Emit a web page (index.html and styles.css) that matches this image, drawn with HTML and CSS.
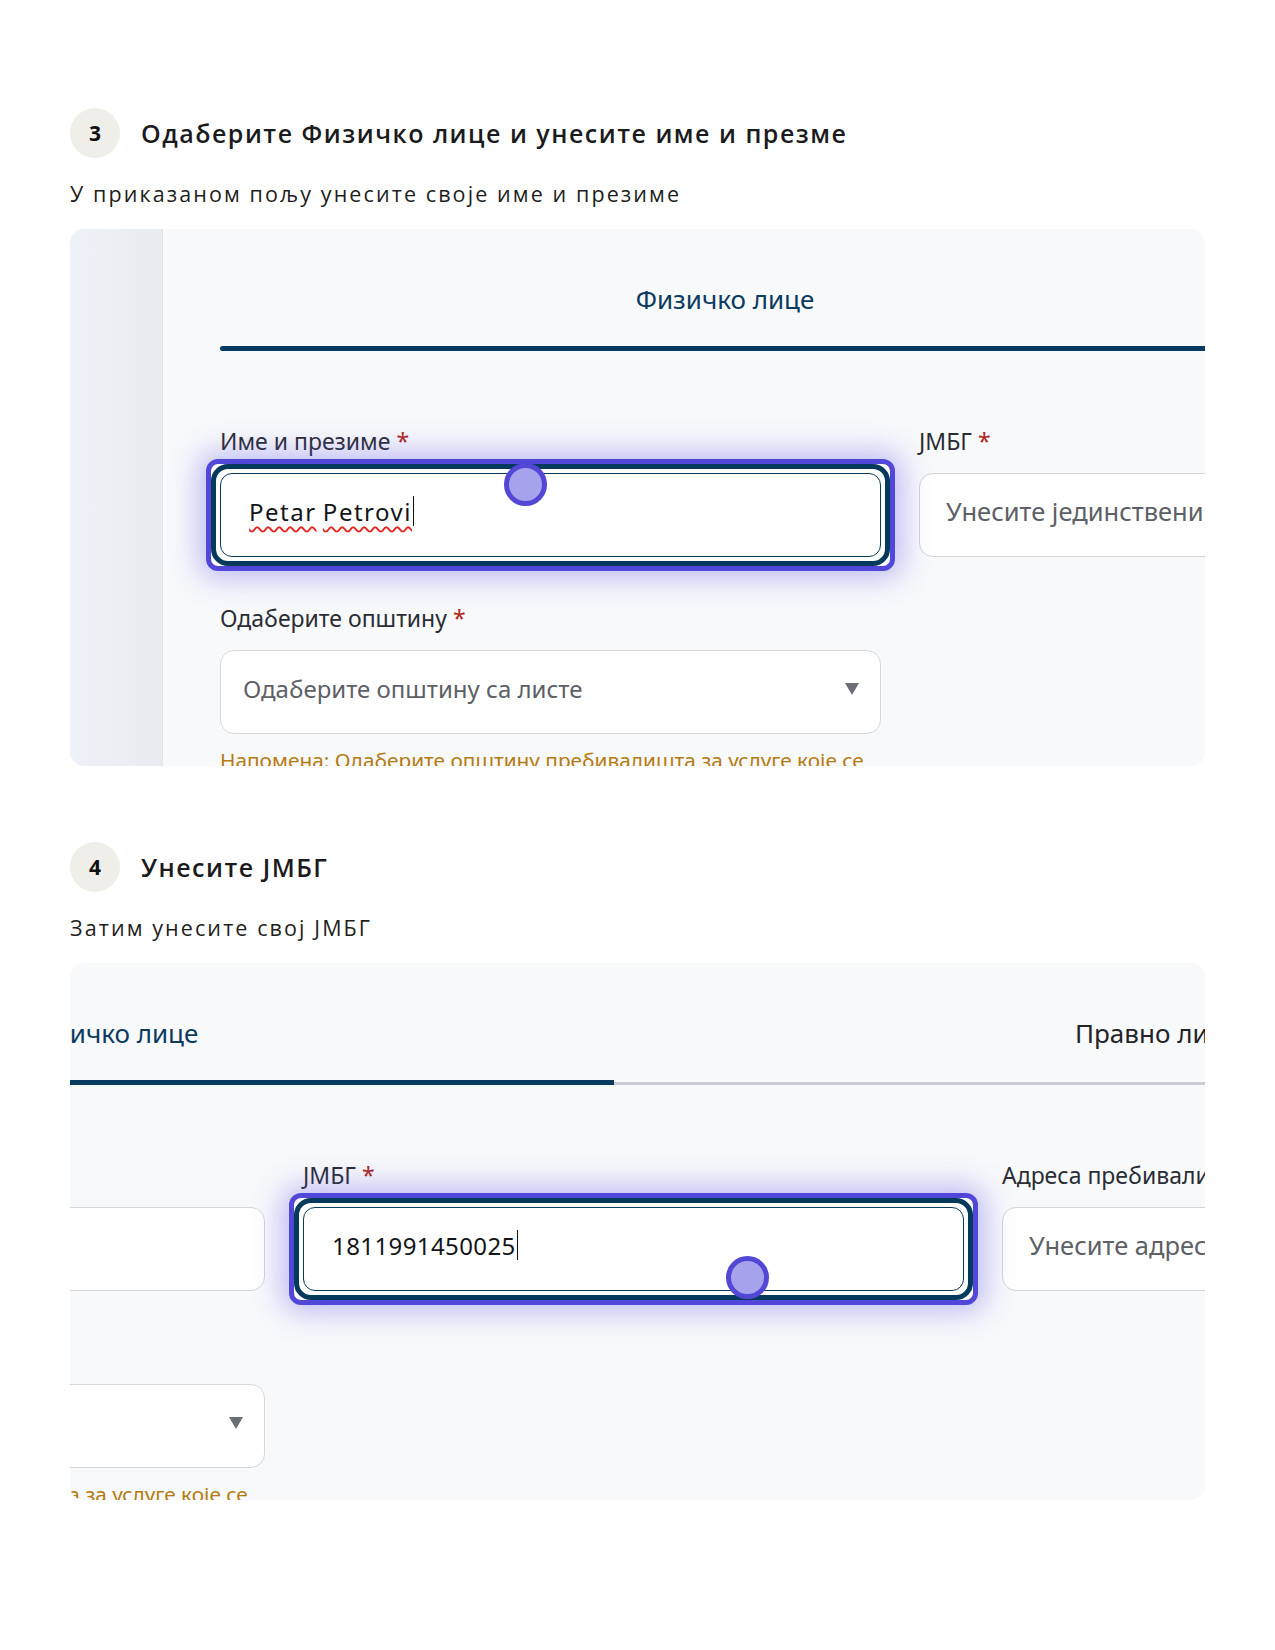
FILE: index.html
```html
<!DOCTYPE html>
<html lang="sr">
<head>
<meta charset="utf-8">
<title>Упутство</title>
<link rel="stylesheet" href="styles.css">
</head>
<body>
<div class="page">

  <section class="step">
    <div class="step-head">
      <span class="badge">3</span>
      <h2 class="step-title">Одаберите Физичко лице и унесите име и презме</h2>
    </div>
    <p class="step-desc">У приказаном пољу унесите своје име и презиме</p>
    <div class="shot">
      <div class="app">
        <aside class="sidebar"></aside>
        <div class="main">
          <div class="tabs">
            <div class="tab tab-active"><span class="tab-label">Физичко лице</span><span class="tab-bar"></span></div>
            <div class="tab tab-idle"><span class="tab-label">Правно лице</span><span class="tab-bar"></span></div>
          </div>
          <div class="form">
            <div class="field">
              <div class="label">Име и презиме <span class="req">*</span></div>
              <div class="focus-ring">
                <div class="focus-inner">
                  <div class="input input-focused"><span class="typo">Petar</span>&nbsp;<span class="typo">Petrovi</span><span class="caret"></span></div>
                </div>
                <span class="touch touch-top"></span>
              </div>
            </div>
            <div class="field">
              <div class="label">ЈМБГ <span class="req">*</span></div>
              <div class="input input-plain"><span class="placeholder">Унесите јединствени матични број грађана</span></div>
            </div>
            <div class="field">
              <div class="label">Адреса пребивалишта <span class="req">*</span></div>
              <div class="input input-plain"><span class="placeholder">Унесите адресу пребивалишта</span></div>
            </div>
            <div class="field">
              <div class="label">Одаберите општину <span class="req">*</span></div>
              <div class="select">
                <span class="placeholder placeholder-select">Одаберите општину са листе</span>
                <svg class="arrow" width="14" height="12" viewBox="0 0 14 12"><polygon points="0,0 14,0 7,12"/></svg>
              </div>
              <p class="note"><span class="note-line">Напомена: Одаберите општину пребивалишта за услуге које се</span><br>пружају на нивоу локалне самоуправе.</p>
            </div>
          </div>
        </div>
      </div>
    </div>
  </section>

  <section class="step step-next">
    <div class="step-head">
      <span class="badge">4</span>
      <h2 class="step-title">Унесите ЈМБГ</h2>
    </div>
    <p class="step-desc">Затим унесите свој ЈМБГ</p>
    <div class="shot">
      <div class="app app-shifted">
        <aside class="sidebar"></aside>
        <div class="main">
          <div class="tabs">
            <div class="tab tab-active"><span class="tab-label">Физичко лице</span><span class="tab-bar"></span></div>
            <div class="tab tab-idle"><span class="tab-label">Правно лице</span><span class="tab-bar"></span></div>
          </div>
          <div class="form">
            <div class="field">
              <div class="label">Име и презиме <span class="req">*</span></div>
              <div class="input input-plain"><span class="value">Petar Petrović</span></div>
            </div>
            <div class="field">
              <div class="label">ЈМБГ <span class="req">*</span></div>
              <div class="focus-ring">
                <div class="focus-inner">
                  <div class="input input-focused"><span class="digits">1811991450025</span><span class="caret"></span></div>
                </div>
                <span class="touch touch-bottom"></span>
              </div>
            </div>
            <div class="field">
              <div class="label">Адреса пребивалишта <span class="req">*</span></div>
              <div class="input input-plain"><span class="placeholder">Унесите адресу пребивалишта</span></div>
            </div>
            <div class="field">
              <div class="label">Одаберите општину <span class="req">*</span></div>
              <div class="select">
                <span class="placeholder placeholder-select">Одаберите општину са листе</span>
                <svg class="arrow" width="14" height="12" viewBox="0 0 14 12"><polygon points="0,0 14,0 7,12"/></svg>
              </div>
              <p class="note"><span class="note-line">Напомена: Одаберите општину пребивалишта за услуге које се</span><br>пружају на нивоу локалне самоуправе.</p>
            </div>
          </div>
        </div>
      </div>
    </div>
  </section>

</div>
</body>
</html>
```

FILE: styles.css
```css
* { box-sizing: border-box; }

html, body {
  margin: 0;
  padding: 0;
  background: #ffffff;
}

body {
  font-family: "Open Sans", "Noto Sans", sans-serif;
  color: #1c1c1e;
}

.page {
  padding: 108px 70px 0 70px;
}

.step-next {
  margin-top: 76px;
}

.step-head {
  display: flex;
  align-items: center;
  gap: 21px;
  height: 50px;
}

.badge {
  width: 50px;
  height: 50px;
  border-radius: 50%;
  background: #f0eee8;
  display: flex;
  align-items: center;
  justify-content: center;
  font-family: "Open Sans", sans-serif;
  font-weight: 700;
  font-size: 21px;
  color: #111;
  flex-shrink: 0;
}

.step-title {
  margin: 0;
  font-size: 25px;
  font-weight: 600;
  letter-spacing: 1.5px;
  color: #1b1b1d;
  line-height: 32px;
}

.step-desc {
  margin: 22px 0 21px 0;
  font-size: 21.5px;
  line-height: 28px;
  letter-spacing: 2.1px;
  color: #1e1e20;
}

/* screenshot card */
.shot {
  height: 537px;
  border-radius: 14px;
  background: #f8f9fb;
  overflow: hidden;
}

.app {
  display: flex;
  width: 2300px;
  height: 537px;
  font-family: "Noto Sans", "Open Sans", sans-serif;
}

.app-shifted {
  margin-left: -616px;
}

.sidebar {
  width: 93px;
  flex-shrink: 0;
  background: linear-gradient(90deg, #eef2f8 0%, #e8ebef 100%);
  border-right: 1.5px solid #e0e3e7;
}

.main {
  flex: 1;
  padding: 53px 0 0 57px;
}

/* tabs */
.tabs {
  display: flex;
}

.tab {
  width: 1010px;
  display: flex;
  flex-direction: column;
}

.tab-label {
  font-size: 26px;
  line-height: 34px;
  height: 34px;
}

.tab-active .tab-label {
  text-align: center;
  color: #0b3b5f;
  margin-bottom: 30px;
}

.tab-active .tab-bar {
  height: 5px;
  background: #063a5e;
  border-radius: 3px 0 0 3px;
}

.tab-idle .tab-label {
  padding-left: 461px;
  color: #232427;
  margin-bottom: 32px;
}

.tab-idle .tab-bar {
  height: 3px;
  background: #c9cdd3;
}

/* form */
.form {
  margin-top: 75px;
  display: grid;
  grid-template-columns: repeat(3, 661px);
  column-gap: 38px;
  row-gap: 46px;
  align-items: start;
}

.label {
  font-size: 23px;
  line-height: 30px;
  color: #2a2d33;
  margin-bottom: 17px;
}

.req {
  color: #b3261e;
}

.input,
.select {
  height: 84px;
  border-radius: 14px;
  background: #ffffff;
  display: flex;
  align-items: center;
  font-size: 24px;
  padding-bottom: 8px;
}

.input-plain {
  border: 1.5px solid #d3d5da;
  padding-left: 26px;
  white-space: nowrap;
  overflow: hidden;
}

.input-focused {
  border: 1.5px solid #083a5c;
  border-radius: 12px;
  padding-left: 28px;
  color: #141518;
  white-space: nowrap;
}

.placeholder {
  color: #5d6066;
  white-space: nowrap;
  font-size: 25.5px;
}

.placeholder-select {
  font-size: 24px;
}

.value {
  color: #141518;
}

.typo {
  letter-spacing: 1.5px;
  text-decoration: underline wavy #e3241f;
  text-decoration-thickness: 1.5px;
  text-underline-offset: 5px;
  text-decoration-skip-ink: none;
}

.digits {
  letter-spacing: 0.4px;
}

.caret {
  display: inline-block;
  width: 1.5px;
  height: 30px;
  background: #111;
  margin-left: 1px;
}

.select {
  border: 1.5px solid #d6d8dc;
  padding-left: 22px;
  padding-right: 21px;
  justify-content: space-between;
}

.arrow {
  fill: #6b6e74;
  margin-top: 2px;
}

.note {
  margin: 12px 0 0 0;
  font-size: 20.8px;
  line-height: 28px;
  color: #b67b10;
}

.note-line {
  white-space: nowrap;
}

/* focus ring */
.focus-ring {
  position: relative;
  margin: -14px -14px -14px -14px;
  border: 5px solid #5147d9;
  border-radius: 12px;
  background: #ffffff;
  box-shadow: 0 0 28px 8px rgba(96, 86, 232, 0.36);
}

.focus-inner {
  border: 5px solid #063a5c;
  border-radius: 17px;
  padding: 4px;
  background: #ffffff;
}

.touch {
  position: absolute;
  width: 43px;
  height: 43px;
  border-radius: 50%;
  border: 5px solid #5347d6;
  background: #a7a2ec;
}

.touch-top {
  left: 293px;
  top: -1px;
}

.touch-bottom {
  left: 432px;
  top: 58px;
}
```
